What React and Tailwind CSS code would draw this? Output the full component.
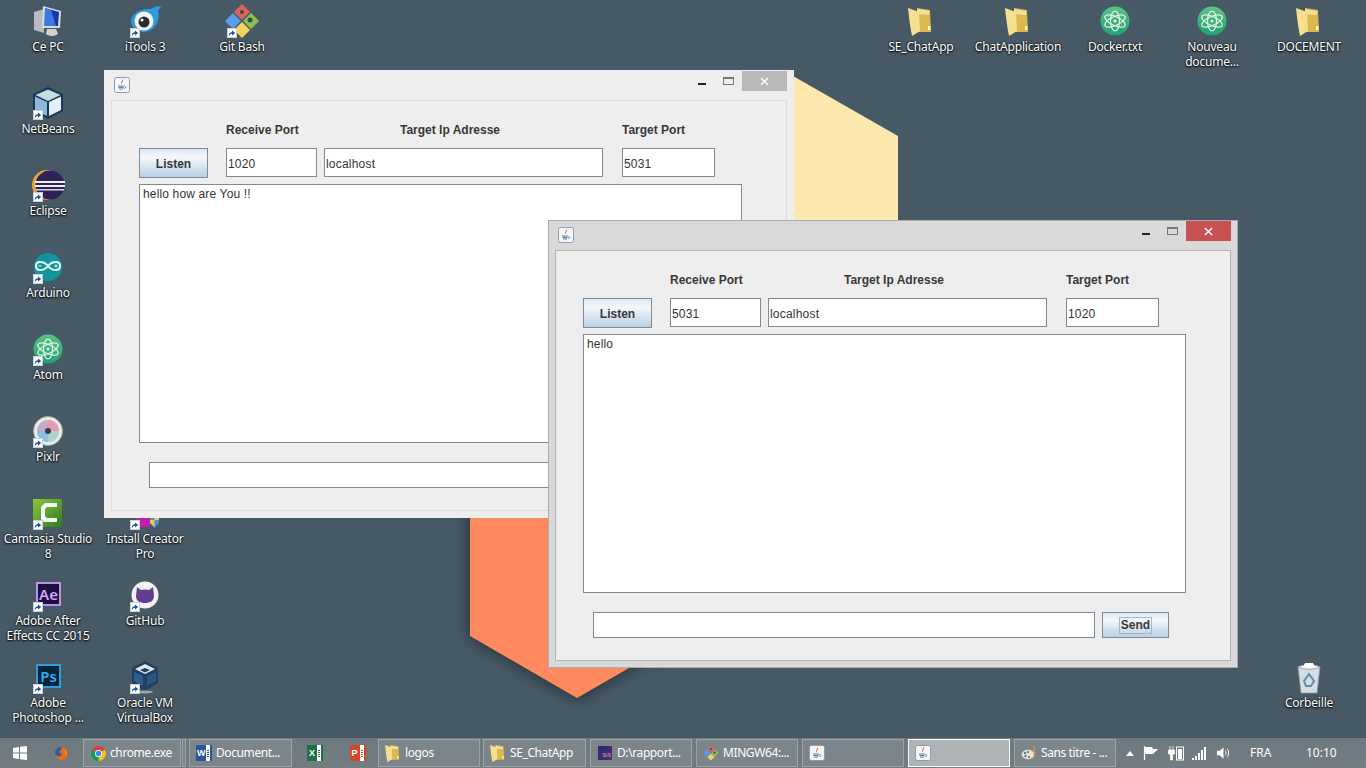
import React from 'react'

const sans = 'font-["Noto_Sans","Liberation_Sans",sans-serif]'
const dialog = 'font-["Liberation_Sans",Arial,sans-serif]'

/* ---------- icons ---------- */

function ShortcutArrow() {
  return (
    <span className="absolute left-[3px] bottom-[1px] w-[10px] h-[10px] bg-white border border-[#c8d0dc] flex items-center justify-center">
      <svg viewBox="0 0 10 10" className="w-[8px] h-[8px]">
        <path d="M1 9 C1 5 3 4 5 4 L5 2 L9 5 L5 8 L5 6 C3.5 6 2.5 7 1 9Z" fill="#1c4f9c" />
      </svg>
    </span>
  )
}

function PcIcon() {
  return (
    <svg viewBox="0 0 36 36" className="w-full h-full">
      <path d="M4 9 L14 6 L14 30 L4 27Z" fill="#b9bcbf" />
      <path d="M13 3 L31 8 L30 25 L12 25Z" fill="#d8dde2" />
      <path d="M15 5 L29 9 L28 23 L14.500 23Z" fill="#1538a8" />
      <path d="M15 5 L21 7 L26 23 L14.500 23Z" fill="#3d7be0" />
      <path d="M17 26 L26 26 L28 31 C24 34 18 33 16 31Z" fill="#cfd2d4" />
    </svg>
  )
}

function IToolsIcon() {
  return (
    <svg viewBox="0 0 36 36" className="w-full h-full">
      <path d="M24 6 C28 3 32 3 35 3 C32 5 33 6 31 8 C33 14 31 24 22 28 C13 31 4 26 4 18 C4 11 13 5 24 6Z" fill="#2c9be0" />
      <circle cx="17" cy="18" r="9.500" fill="#f2f4f6" />
      <circle cx="17" cy="19" r="5.500" fill="#2b2b2b" />
      <circle cx="15" cy="17" r="1.500" fill="#fff" />
    </svg>
  )
}

function GitIcon({ className = 'w-full h-full' }) {
  return (
    <svg viewBox="0 0 36 36" className={className}>
      <path d="M18 1 L26 9 L18 17 L10 9Z" fill="#d9615f" />
      <path d="M27 10 L35 18 L27 26 L19 18Z" fill="#8cc152" />
      <path d="M18 19 L26 27 L18 35 L10 27Z" fill="#f4d35e" />
      <path d="M9 10 L17 18 L9 26 L1 18Z" fill="#5b9bea" />
      <circle cx="18" cy="9" r="2" fill="#444" />
      <circle cx="26" cy="17" r="2.500" fill="#444" />
    </svg>
  )
}

function NetBeansIcon() {
  return (
    <svg viewBox="0 0 36 36" className="w-full h-full">
      <path d="M18 2 L33 9 L33 26 L18 34 L3 26 L3 9Z" fill="#1d3557" />
      <path d="M18 4.500 L30.500 10 L18 16 L5.500 10Z" fill="#bfe0dc" />
      <path d="M5 11.500 L17 17 L17 31 L5 25Z" fill="#8fb7dc" />
      <path d="M19 17 L31 11.500 L31 25 L19 31Z" fill="#e4eef6" />
    </svg>
  )
}

function EclipseIcon() {
  return (
    <svg viewBox="0 0 36 36" className="w-full h-full">
      <circle cx="17" cy="18" r="15" fill="#e8a33c" />
      <circle cx="20" cy="18" r="14.500" fill="#2c2255" />
      <rect x="5" y="14" width="30" height="2" fill="#f0eef5" />
      <rect x="5" y="18" width="30" height="2" fill="#f0eef5" />
      <rect x="6" y="22" width="28" height="1.500" fill="#d8d4e6" />
    </svg>
  )
}

function ArduinoIcon() {
  return (
    <svg viewBox="0 0 36 36" className="w-full h-full">
      <circle cx="18" cy="18" r="14" fill="#10959c" />
      <path d="M18 17 C15 13 12 13 10 13 C7 13 6 15 6 17 C6 19 7 21 10 21 C12 21 15 21 18 17 C21 13 24 13 26 13 C29 13 30 15 30 17 C30 19 29 21 26 21 C24 21 21 21 18 17Z" fill="none" stroke="#e8f6f6" strokeWidth="2" />
      <path d="M8.500 17h3M24.500 17h3M26 15.500v3" stroke="#e8f6f6" strokeWidth="1" />
    </svg>
  )
}

function AtomIcon({ id }) {
  return (
    <svg viewBox="0 0 36 36" className="w-full h-full">
      <defs>
        <linearGradient id={id} x1="0" y1="0" x2="0" y2="1">
          <stop offset="0" stopColor="#5cc486" />
          <stop offset="1" stopColor="#1fa173" />
        </linearGradient>
      </defs>
      <circle cx="18" cy="18" r="14.500" fill={`url(#${id})`} />
      <g fill="none" stroke="#e6f6ea" strokeWidth="1.200">
        <ellipse cx="18" cy="18" rx="11" ry="4.500" transform="rotate(25 18 18)" />
        <ellipse cx="18" cy="18" rx="11" ry="4.500" transform="rotate(-25 18 18)" />
        <ellipse cx="18" cy="18" rx="10" ry="4.500" transform="rotate(90 18 18)" />
      </g>
      <circle cx="18" cy="18" r="1.500" fill="#e6f6ea" />
    </svg>
  )
}

function PixlrIcon() {
  return (
    <svg viewBox="0 0 36 36" className="w-full h-full">
      <circle cx="18" cy="18" r="14.500" fill="#e9ebe8" stroke="#9aa39c" strokeWidth="0.800" />
      <circle cx="18" cy="18" r="11" fill="#c9a8c8" />
      <path d="M18 7 A11 11 0 0 1 29 18 L18 18Z" fill="#e79ab0" />
      <path d="M29 18 A11 11 0 0 1 18 29 L18 18Z" fill="#a9d4cf" />
      <path d="M18 29 A11 11 0 0 1 7 18 L18 18Z" fill="#8cc0e0" />
      <circle cx="18" cy="18" r="3" fill="#3c3c44" />
    </svg>
  )
}

function CamtasiaIcon() {
  return (
    <svg viewBox="0 0 36 36" className="w-full h-full">
      <defs>
        <linearGradient id="camt" x1="0" y1="0" x2="1" y2="1">
          <stop offset="0" stopColor="#8dc63f" />
          <stop offset="1" stopColor="#2f7a22" />
        </linearGradient>
      </defs>
      <rect x="3" y="4" width="29" height="28" fill="url(#camt)" />
      <path d="M27 8 H15 L11 12 V24 L14 27 H27 V23 H17 L15 21 V14 L17 12 H27Z" fill="#f4f8ee" />
    </svg>
  )
}

function InstallCreatorIcon() {
  return (
    <svg viewBox="0 0 36 36" className="w-full h-full">
      <rect x="10" y="12" width="13" height="20" fill="#c21fa8" />
      <path d="M23 20 L32 20 L32 28 L27.500 33 L23 28Z" fill="#4a8fd8" />
      <path d="M27.500 20 H32 V25 H27.500Z" fill="#f2c94c" />
      <path d="M23 25 H27.500 V32 L23 28Z" fill="#f2c94c" />
    </svg>
  )
}

function AdobeIcon({ label, textColor, borderColor, bg }) {
  return (
    <span className={`absolute left-[6px] top-[5px] w-[25px] h-[24px] border-2 flex items-center justify-center text-[15px] font-semibold leading-none ${sans} ${textColor} ${borderColor} ${bg}`}>
      {label}
    </span>
  )
}

function GitHubIcon() {
  return (
    <svg viewBox="0 0 36 36" className="w-full h-full">
      <circle cx="18" cy="18" r="13.500" fill="#f4f2f6" />
      <path d="M10 10 L14 13 C16.500 12.300 19.500 12.300 22 13 L26 10 L27 19 C27 24 23 26 18 26 C13 26 9 24 9 19Z" fill="#613f95" />
    </svg>
  )
}

function VirtualBoxIcon() {
  return (
    <svg viewBox="0 0 36 36" className="w-full h-full">
      <path d="M18 2 L31 9 L31 24 L18 32 L5 24 L5 9Z" fill="#1f3f63" />
      <path d="M18 5 L28 10 L18 15 L8 10Z" fill="#dfe7ee" />
      <path d="M18 9 L23 11 L18 13.500 L13 11Z" fill="#1f3f63" />
      <path d="M7 13 L16 17 L16 27 L7 22Z" fill="#2e5f92" />
      <path d="M20 17 L29 13 L29 22 L20 27Z" fill="#2a5684" />
      <ellipse cx="18" cy="33" rx="8" ry="1.500" fill="#a0a8ae" />
    </svg>
  )
}

function RecycleBinIcon() {
  return (
    <svg viewBox="0 0 36 36" className="w-full h-full">
      <path d="M7 8 L29 8 L26 34 L10 34Z" fill="#d6dde2" stroke="#8a979f" strokeWidth="0.800" />
      <path d="M7 8 C12 5 24 5 29 8 C24 11 12 11 7 8Z" fill="#f2f5f7" stroke="#8a979f" strokeWidth="0.800" />
      <path d="M14 4 L22 4 L24 8 L12 8Z" fill="#fff" />
      <path d="M13 22 L18 15 L23 22 L20 27 L15 27Z" fill="none" stroke="#5f8fb0" strokeWidth="2" />
    </svg>
  )
}

function FolderIcon({ className = 'w-full h-full' }) {
  return (
    <svg viewBox="0 0 36 36" className={className}>
      <path d="M14 5 L27 7 L28 29 L14 29Z" fill="#dcb94f" />
      <path d="M14 6 L26 8 L26 12 L14 11Z" fill="#f4e09a" />
      <path d="M5 5 L16 9 L17 28 L9 33 C7 24 6 14 5 5Z" fill="#f5e08f" />
      <rect x="25" y="23" width="2.500" height="4" fill="#fff3c0" />
    </svg>
  )
}

function JavaIcon({ className = 'w-[16px] h-[16px]' }) {
  return (
    <svg viewBox="0 0 16 16" className={className}>
      <rect x="0.500" y="0.500" width="15" height="15" rx="2" fill="#f4f6f9" stroke="#8d9bb0" />
      <path d="M9 2 C10 4 7 5 8 7.500 C6 6 8 4 9 2Z" fill="#d9541e" />
      <path d="M4 9 H10 M4.500 10.500 H9.500 M5 12 H9" stroke="#4a6f96" strokeWidth="0.900" />
      <path d="M10.500 9.500 C12.500 9.500 12 11.500 10 11.500" fill="none" stroke="#4a6f96" strokeWidth="0.800" />
    </svg>
  )
}

function ChromeIcon() {
  return (
    <svg viewBox="0 0 16 16" className="w-[15px] h-[15px]">
      <path d="M8 8 L1.100 4 A8 8 0 0 1 14.900 4Z" fill="#db4437" />
      <path d="M8 8 L14.900 4 A8 8 0 0 1 8 16Z" fill="#f4c20d" />
      <path d="M8 8 L8 16 A8 8 0 0 1 1.100 4Z" fill="#0f9d58" />
      <circle cx="8" cy="8" r="3.800" fill="#fff" />
      <circle cx="8" cy="8" r="2.900" fill="#4285f4" />
    </svg>
  )
}

function FirefoxIcon() {
  return (
    <svg viewBox="0 0 16 16" className="w-[15px] h-[15px]">
      <circle cx="8" cy="8" r="7.200" fill="#2f5f9e" />
      <path d="M8 .800 C12.500 1 15.500 5 15 9 C14.500 13 11 15.500 7 15 C3.500 14.500 1 11.500 1.200 8 C2 10 3.500 11 5 11 C7.500 11 9 9.500 8 8 C6.500 8 5.500 7 6 5.500 C7.500 5 8.500 3 8 .800Z" fill="#e66a1f" />
      <path d="M11 3 C13 5 13.500 8 12 10 C12.500 7.500 12 5 11 3Z" fill="#f6c33b" />
    </svg>
  )
}

function OfficeIcon({ bg, label }) {
  return (
    <span className={`relative w-[16px] h-[16px] flex items-center bg-white border-r-2 ${label === 'X' ? 'border-[#1e7145]' : label === 'P' ? 'border-[#d24726]' : 'border-[#2b579a]'}`}>
      <span className={`w-[10px] h-[16px] flex items-center justify-center text-[9px] font-bold text-white leading-none ${dialog} ${bg}`}>{label}</span>
      <span className="flex-1 flex flex-col gap-[1px] px-[1px]">
        <span className={`h-[1px] ${bg}`} />
        <span className={`h-[1px] ${bg}`} />
        <span className={`h-[1px] ${bg}`} />
        <span className={`h-[1px] ${bg}`} />
      </span>
    </span>
  )
}

function TexIcon() {
  return (
    <span className="w-[14px] h-[14px] bg-gradient-to-br from-[#1d2a6e] to-[#5b2a6a] text-[6px] text-[#d7a6c0] leading-none flex items-end justify-end pb-[2px] pr-[1px] font-['Liberation_Serif',serif]">
      TeX
    </span>
  )
}

function PaintIcon() {
  return (
    <svg viewBox="0 0 16 16" className="w-[16px] h-[16px]">
      <ellipse cx="7" cy="9.500" rx="6.500" ry="5" fill="#e7e3d8" stroke="#8f8a80" strokeWidth="0.500" />
      <circle cx="4" cy="8" r="1.200" fill="#3f7fd0" />
      <circle cx="7" cy="7" r="1.200" fill="#5aa84a" />
      <circle cx="4.500" cy="11" r="1.200" fill="#d04a3f" />
      <circle cx="8" cy="12" r="1.100" fill="#6a4aa8" />
      <path d="M12.500 1 L14 1 L14 12 L12.500 12Z" fill="#e0913a" />
    </svg>
  )
}

/* ---------- desktop ---------- */

const desktopIcons = [
  { label: 'Ce PC', pos: 'left-[5px] top-[3px]', icon: <PcIcon /> },
  { label: 'iTools 3', pos: 'left-[102px] top-[3px]', icon: <IToolsIcon />, link: true },
  { label: 'Git Bash', pos: 'left-[199px] top-[3px]', icon: <GitIcon />, link: true },
  { label: 'NetBeans', pos: 'left-[5px] top-[85px]', icon: <NetBeansIcon />, link: true },
  { label: 'Eclipse', pos: 'left-[5px] top-[167px]', icon: <EclipseIcon />, link: true },
  { label: 'Arduino', pos: 'left-[5px] top-[249px]', icon: <ArduinoIcon />, link: true },
  { label: 'Atom', pos: 'left-[5px] top-[331px]', icon: <AtomIcon id="atom-a" />, link: true },
  { label: 'Pixlr', pos: 'left-[5px] top-[413px]', icon: <PixlrIcon />, link: true },
  { label: 'Camtasia Studio\n8', pos: 'left-[5px] top-[495px]', icon: <CamtasiaIcon />, link: true },
  { label: 'Install Creator\nPro', pos: 'left-[102px] top-[495px]', icon: <InstallCreatorIcon />, link: true },
  { label: 'Adobe After\nEffects CC 2015', pos: 'left-[5px] top-[577px]', icon: <AdobeIcon label="Ae" textColor="text-[#d3a9ff]" borderColor="border-[#b896e6]" bg="bg-[#1f0d3d]" />, link: true },
  { label: 'GitHub', pos: 'left-[102px] top-[577px]', icon: <GitHubIcon />, link: true },
  { label: 'Adobe\nPhotoshop ...', pos: 'left-[5px] top-[659px]', icon: <AdobeIcon label="Ps" textColor="text-[#35a9f0]" borderColor="border-[#2e9fdc]" bg="bg-[#04233a]" />, link: true },
  { label: 'Oracle VM\nVirtualBox', pos: 'left-[102px] top-[659px]', icon: <VirtualBoxIcon />, link: true },
  { label: 'SE_ChatApp', pos: 'left-[878px] top-[3px]', icon: <FolderIcon /> },
  { label: 'ChatApplication', pos: 'left-[975px] top-[3px]', icon: <FolderIcon /> },
  { label: 'Docker.txt', pos: 'left-[1072px] top-[3px]', icon: <AtomIcon id="atom-b" /> },
  { label: 'Nouveau\ndocume...', pos: 'left-[1169px] top-[3px]', icon: <AtomIcon id="atom-c" /> },
  { label: 'DOCEMENT', pos: 'left-[1266px] top-[3px]', icon: <FolderIcon /> },
  { label: 'Corbeille', pos: 'left-[1266px] top-[659px]', icon: <RecycleBinIcon /> },
]

function DesktopIcon({ label, pos, icon, link }) {
  return (
    <div className={`absolute w-[86px] flex flex-col items-center ${pos}`}>
      <div className="relative w-[36px] h-[36px]">
        {icon}
        {link && <ShortcutArrow />}
      </div>
      <div className={`text-[12px] leading-[15px] text-center text-white whitespace-pre tracking-[-0.2px] [text-shadow:0_1px_2px_#000,0_0_2px_#000] ${sans}`}>
        {label}
      </div>
    </div>
  )
}

function Wallpaper() {
  return (
    <svg viewBox="0 0 1366 738" className="absolute inset-0 w-[1366px] h-[738px]">
      <path d="M470 500 L470 636 L577 698 L900 512 L900 400Z" fill="#ff8a60" className="drop-shadow-[0_0_8px_rgba(0,0,0,0.55)]" />
      <path d="M780 70 L793 76 L898 136 L898 400 L780 400Z" fill="#fde9b0" />
    </svg>
  )
}

/* ---------- swing windows ---------- */

function Field({ value, className }) {
  return (
    <div className={`h-[29px] bg-white border border-[#7f8a94] pl-[1px] pt-[3px] flex items-center text-[12px] tracking-[0.2px] text-[#333] ${className}`}>
      {value}
    </div>
  )
}

function SwingButton({ children, className }) {
  return (
    <div className={`flex items-center justify-center border border-[#7f8a94] bg-gradient-to-b from-[#dde8f3] via-[#f4f8fb] via-30% to-[#b8cfe5] text-[12px] font-bold text-[#383838] ${className}`}>
      {children}
    </div>
  )
}

function JavaWindow({ receive, target, message, active, className }) {
  return (
    <div className={`absolute w-[690px] h-[448px] flex flex-col border ${dialog} ${active ? 'bg-[#d9d9d9] border-[#ababab]' : 'bg-[#eeeeee] border-[#eeeeee]'} ${className}`}>
      <div className="h-[29px] shrink-0 relative flex items-center pl-[9px] pb-[2px]">
        <JavaIcon />
        <div className="ml-auto flex items-start self-start">
          <div className="w-[8px] h-[2px] bg-[#222] mt-[12px] mr-[17px]" />
          <div className="w-[11px] h-[8px] border border-[#777] border-t-2 mt-[6px] mr-[8px]" />
          <div className={`w-[45px] h-[20px] mr-[6px] flex items-center justify-center ${active ? 'bg-[#c75050]' : 'bg-[#b9b9b9]'}`}>
            <svg viewBox="0 0 10 10" className="w-[9px] h-[9px]">
              <path d="M1 1 L9 9 M9 1 L1 9" stroke="#fff" strokeWidth="1.500" />
            </svg>
          </div>
        </div>
      </div>

      <div className={`flex-1 mb-[6px] ml-[6px] mr-[6px] border bg-[#eeeeee] ${active ? 'border-[#b4b4b4]' : 'border-[#dcdcdc]'}`}>
        {/* Labels */}
        <div className="flex pt-[21px] h-[47px] text-[12px] font-bold text-[#383838] leading-[16px]">
          <div className="ml-[114px] w-[98px]">Receive Port</div>
          <div className="ml-[76px] w-[222px]">Target Ip Adresse</div>
          <div>Target Port</div>
        </div>

        {/* Ports */}
        <div className="flex items-start ml-[27px]">
          <SwingButton className="w-[69px] h-[30px] pt-[1px]">Listen</SwingButton>
          <Field value={receive} className="w-[91px] ml-[18px]" />
          <Field value="localhost" className="w-[279px] ml-[7px]" />
          <Field value={target} className="w-[93px] ml-[19px]" />
        </div>

        {/* Messages */}
        <div className="ml-[27px] mt-[6px] w-[603px] h-[259px] bg-white border border-[#7f8a94] px-[3px] py-[1px] text-[12px] leading-[16px] tracking-[0.15px] text-[#333]">
          {message}
        </div>

        {/* Send */}
        <div className="flex ml-[37px] mt-[19px]">
          <div className="w-[502px] h-[26px] bg-white border border-[#7f8a94]" />
          <SwingButton className="w-[67px] h-[26px] ml-[7px]">
            <span className="border border-[#a3b8cc] px-[1px] leading-[15px]">Send</span>
          </SwingButton>
        </div>
      </div>
    </div>
  )
}

/* ---------- taskbar ---------- */

function TaskButton({ icon, label, active, className = 'w-[102px]' }) {
  return (
    <div className={`h-[28px] shrink-0 flex items-center gap-[4px] pl-[6px] border text-[12px] text-white tracking-[-0.4px] ${sans} ${className} ${active ? 'bg-[#aeb3b6] border-white' : 'bg-[#7b858a] border-[#9ca4a8]'}`}>
      <span className="w-[16px] flex justify-center shrink-0">{icon}</span>
      {label && <span className="whitespace-nowrap">{label}</span>}
    </div>
  )
}

function Taskbar() {
  return (
    <div className="h-[30px] shrink-0 bg-gradient-to-b from-[#6e7a80] to-[#727c81] flex items-center relative">
      <div className="w-[40px] flex justify-center">
        <svg viewBox="0 0 14 14" className="w-[14px] h-[14px]">
          <path d="M0 2 L6 1 V6.500 H0Z M7 .800 L14 0 V6.500 H7Z M0 7.500 H6 V13 L0 12Z M7 7.500 H14 V14 L7 13.200Z" fill="#fff" />
        </svg>
      </div>
      <div className="w-[43px] flex justify-center"><FirefoxIcon /></div>
      <TaskButton icon={<ChromeIcon />} label="chrome.exe" className="w-[98px]" />
      <div className="w-[4px] h-[28px] ml-[1px] mr-[3px] border border-[#9ca4a8] bg-[#7b858a] shrink-0" />
      <TaskButton icon={<OfficeIcon bg="bg-[#2b579a]" label="W" />} label="Document..." className="w-[103px]" />
      <div className="w-[44px] ml-[1px] flex justify-center shrink-0"><OfficeIcon bg="bg-[#1e7145]" label="X" /></div>
      <div className="w-[41px] flex justify-center shrink-0"><OfficeIcon bg="bg-[#d24726]" label="P" /></div>
      <TaskButton icon={<FolderIcon className="w-[22px] h-[22px] shrink-0" />} label="logos" />
      <div className="w-[3px] shrink-0" />
      <TaskButton icon={<FolderIcon className="w-[22px] h-[22px] shrink-0" />} label="SE_ChatApp" className="w-[103px]" />
      <div className="w-[4px] shrink-0" />
      <TaskButton icon={<TexIcon />} label="D:\rapport..." />
      <div className="w-[4px] shrink-0" />
      <TaskButton icon={<GitIcon className="w-[16px] h-[16px]" />} label="MINGW64:..." />
      <div className="w-[4px] shrink-0" />
      <TaskButton icon={<JavaIcon />} />
      <div className="w-[4px] shrink-0" />
      <TaskButton icon={<JavaIcon />} active />
      <div className="w-[4px] shrink-0" />
      <TaskButton icon={<PaintIcon />} label="Sans titre - ..." />

      {/* Tray */}
      <div className={`flex items-center text-[12px] text-white ${sans}`}>
        <svg viewBox="0 0 8 5" className="ml-[10px] w-[8px] h-[5px]"><path d="M4 0 L8 5 H0Z" fill="#fff" /></svg>
        <svg viewBox="0 0 16 16" className="ml-[9px] w-[16px] h-[16px]">
          <path d="M1.500 1 V15" stroke="#fff" strokeWidth="1.200" />
          <path d="M2 2 H9 L10 4 H15 L12 7 L10 9 H2Z" fill="#fff" />
        </svg>
        <svg viewBox="0 0 16 16" className="ml-[9px] w-[16px] h-[16px]">
          <path d="M2 1v4M5 1v4M.500 5h6v4h-2v6h-2V9h-2Z" fill="#fff" stroke="#fff" strokeWidth="0.800" />
          <rect x="8.500" y="2" width="7" height="13" fill="none" stroke="#fff" />
          <rect x="10" y="4" width="4" height="10" fill="#fff" />
        </svg>
        <svg viewBox="0 0 16 16" className="ml-[7px] w-[16px] h-[16px]">
          <path d="M1 13h2v2H1Z M4 11h2v4H4Z M7 8h2v7H7Z M10 5h2v10h-2Z M13 2h2v13h-2Z" fill="#fff" />
        </svg>
        <svg viewBox="0 0 16 16" className="ml-[9px] w-[15px] h-[16px]">
          <path d="M1 5.500h3L8 2v12L4 10.500H1Z" fill="#fff" />
          <path d="M10 5.500c1 1.500 1 3.500 0 5M12 3.500c2 2.500 2 6.500 0 9" fill="none" stroke="#fff" />
        </svg>
        <span className="ml-[19px] w-[56px]">FRA</span>
        <span>10:10</span>
      </div>
    </div>
  )
}

export default function App() {
  return (
    <div className="w-[1366px] h-[768px] overflow-hidden flex flex-col bg-[#465965]">
      <div className="relative flex-1">
        <Wallpaper />
        {desktopIcons.map(i => <DesktopIcon key={i.label} {...i} />)}
        <JavaWindow
          className="left-[104px] top-[70px]"
          receive="1020"
          target="5031"
          message="hello how are You !!"
        />
        <JavaWindow
          active
          className="left-[548px] top-[220px]"
          receive="5031"
          target="1020"
          message="hello"
        />
      </div>
      <Taskbar />
    </div>
  )
}
